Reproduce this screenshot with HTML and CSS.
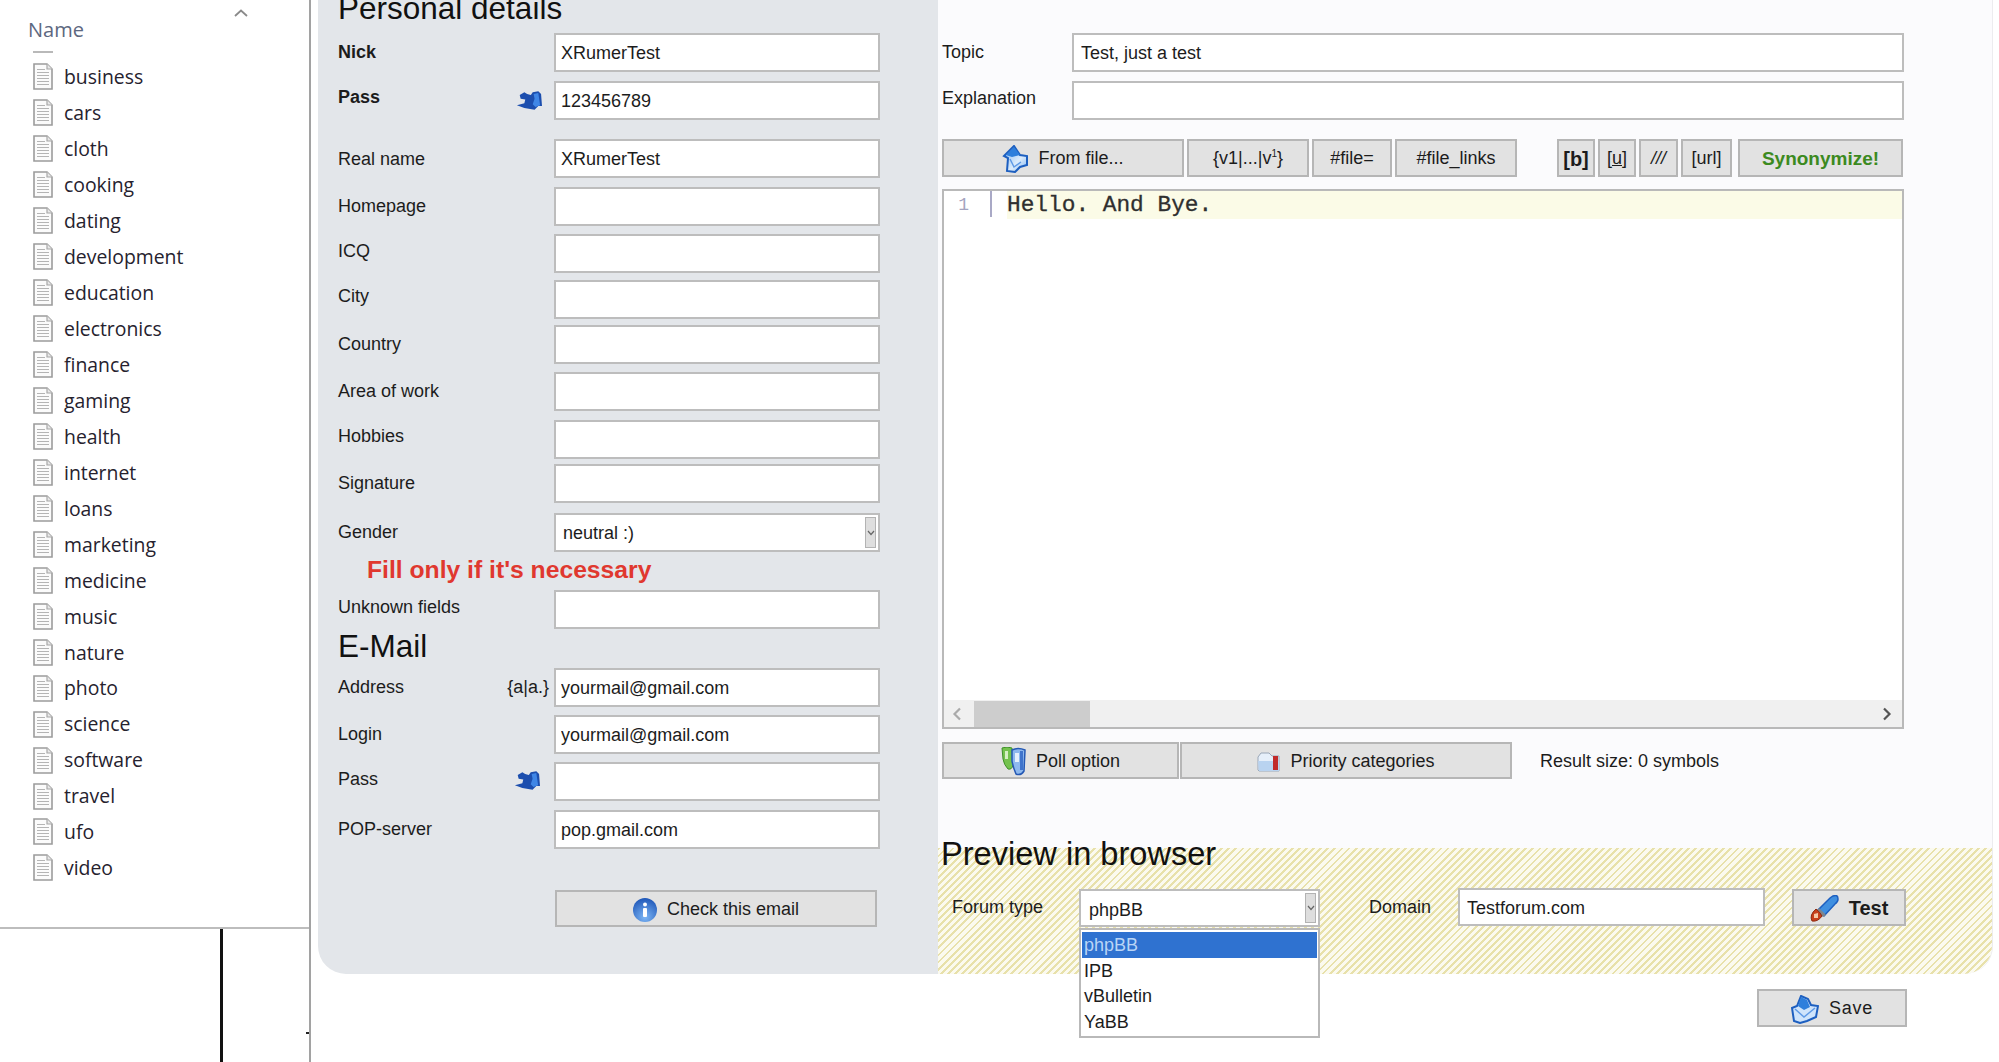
FILE: index.html
```html
<!DOCTYPE html>
<html lang="en">
<head>
<meta charset="utf-8">
<title>Project editor</title>
<link rel="stylesheet" href="styles.css">
</head>
<body>
<svg class="defs" width="0" height="0">
  <symbol id="doc" viewBox="0 0 20 27">
    <path d="M1 1H14L19 6V26H1Z" fill="#fbfbfb" stroke="#9c9c9c" stroke-width="1.6"/>
    <path d="M14 1V6H19" fill="#e8e8e8" stroke="#a8a8a8" stroke-width="1.2"/>
    <path d="M4 6.5H12M4 9.5H16M4 12.5H16M4 15.500H16M4 18.500H16M4 21.500H16" stroke="#b4b4b4" stroke-width="1.2"/>
  </symbol>
  <symbol id="shirt" viewBox="0 0 28 21">
    <path d="M4 4L9 1L12 3L16 4L18 1L24 0L27 3L28 16L24 16L20 20L9 18L1 15L9 13L10 9L5 8Z" fill="#1c4eae"/>
    <path d="M19 3L24 2L26 15L21 17L18 14L20 8Z" fill="#3f86e6"/>
  </symbol>
</svg>

<aside class="sidebar">
  <div class="files">
    <div class="files-head">
      <div class="files-title">
        <span>Name</span>
        <svg class="sort" width="14" height="8" viewBox="0 0 14 8"><path d="M1 7L7 1.500L13 7" fill="none" stroke="#8a8a8a" stroke-width="1.800"/></svg>
      </div>
      <div class="files-tick"></div>
    </div>
    <ul class="file-list">
      <li><svg class="doc"><use href="#doc"/></svg>business</li>
      <li><svg class="doc"><use href="#doc"/></svg>cars</li>
      <li><svg class="doc"><use href="#doc"/></svg>cloth</li>
      <li><svg class="doc"><use href="#doc"/></svg>cooking</li>
      <li><svg class="doc"><use href="#doc"/></svg>dating</li>
      <li><svg class="doc"><use href="#doc"/></svg>development</li>
      <li><svg class="doc"><use href="#doc"/></svg>education</li>
      <li><svg class="doc"><use href="#doc"/></svg>electronics</li>
      <li><svg class="doc"><use href="#doc"/></svg>finance</li>
      <li><svg class="doc"><use href="#doc"/></svg>gaming</li>
      <li><svg class="doc"><use href="#doc"/></svg>health</li>
      <li><svg class="doc"><use href="#doc"/></svg>internet</li>
      <li><svg class="doc"><use href="#doc"/></svg>loans</li>
      <li><svg class="doc"><use href="#doc"/></svg>marketing</li>
      <li><svg class="doc"><use href="#doc"/></svg>medicine</li>
      <li><svg class="doc"><use href="#doc"/></svg>music</li>
      <li><svg class="doc"><use href="#doc"/></svg>nature</li>
      <li><svg class="doc"><use href="#doc"/></svg>photo</li>
      <li><svg class="doc"><use href="#doc"/></svg>science</li>
      <li><svg class="doc"><use href="#doc"/></svg>software</li>
      <li><svg class="doc"><use href="#doc"/></svg>travel</li>
      <li><svg class="doc"><use href="#doc"/></svg>ufo</li>
      <li><svg class="doc"><use href="#doc"/></svg>video</li>
    </ul>
  </div>
  <div class="sidebar-foot"><div class="splitter"></div><div class="speck"></div></div>
</aside>

<main class="main">
  <div class="panel">
    <section class="details">
      <h2 class="title title-first">Personal details</h2><span></span>

      <label class="lbl strong">Nick</label><input class="field" value="XRumerTest">
      <label class="lbl strong lift"><span>Pass</span><svg class="shirt"><use href="#shirt"/></svg></label><input class="field" value="123456789">
      <label class="lbl drop">Real name</label><input class="field" value="XRumerTest">
      <label class="lbl">Homepage</label><input class="field">
      <label class="lbl lift-s">ICQ</label><input class="field">
      <label class="lbl lift">City</label><input class="field">
      <label class="lbl">Country</label><input class="field">
      <label class="lbl">Area of work</label><input class="field">
      <label class="lbl lift">Hobbies</label><input class="field">
      <label class="lbl">Signature</label><input class="field">
      <label class="lbl">Gender</label>
      <div class="combo"><span>neutral :)</span><span class="combo-btn"><svg width="8" height="6" viewBox="0 0 8 6"><path d="M1 1L4 4.500L7 1" fill="none" stroke="#666" stroke-width="1.200"/></svg></span></div>
      <p class="note">Fill only if it's necessary</p>
      <label class="lbl lift-s">Unknown fields</label><input class="field">
      <h2 class="title title-mail">E-Mail</h2>
      <label class="lbl"><span>Address</span><span class="hint">{a|a.}</span></label><input class="field" value="yourmail@gmail.com">
      <label class="lbl">Login</label><input class="field" value="yourmail@gmail.com">
      <label class="lbl lift-s"><span>Pass</span><svg class="shirt shirt-b"><use href="#shirt"/></svg></label><input class="field">
      <label class="lbl">POP-server</label><input class="field" value="pop.gmail.com">
      <button class="btn btn-check">
        <svg width="24" height="26" viewBox="0 0 24 26"><defs><radialGradient id="infoG" cx=".5" cy=".8" r=".8"><stop offset="0" stop-color="#7db6f5"/><stop offset="1" stop-color="#1f57b8"/></radialGradient></defs><circle cx="12" cy="13" r="12" fill="url(#infoG)"/><circle cx="12" cy="7.500" r="2" fill="#fff"/><rect x="10" y="11" width="4" height="9" rx="1" fill="#fff"/></svg>
        <span>Check this email</span>
      </button>
    </section>

    <section class="message">
      <div class="message-top">
        <div class="line"><label class="lbl-r">Topic</label><input class="field field-wide" value="Test, just a test"></div>
        <div class="line line-lift"><label class="lbl-r">Explanation</label><input class="field field-wide"></div>
        <div class="tools">
          <button class="btn w-file">
            <svg width="26" height="28" viewBox="0 0 26 28"><defs><linearGradient id="fileG" x1="0" y1="0" x2="1" y2="1"><stop offset="0" stop-color="#7fb4ef"/><stop offset=".6" stop-color="#dcecfc"/><stop offset="1" stop-color="#7fb4ef"/></linearGradient></defs><path d="M12 1L2 11L6 13L5 26L13 27L18 22L25 20L25 11L18 10Z" fill="url(#fileG)" stroke="#1d5fc0" stroke-width="2"/><path d="M12 2L4 10L10 12L18 10Z" fill="#2e7fdc"/><path d="M8 14L12 22L19 17" fill="none" stroke="#5f9ae6" stroke-width="1.500"/></svg>
            <span>From file...</span>
          </button>
          <button class="btn w-var"><span>{v1|...|v<sup class="sup">1</sup>}</span></button>
          <button class="btn w-eq">#file=</button>
          <button class="btn w-links">#file_links</button>
          <button class="btn w-b tools-sep"><b>[b]</b></button>
          <button class="btn w-u"><span>[<u>u</u>]</span></button>
          <button class="btn w-i"><i>///</i></button>
          <button class="btn w-url">[url]</button>
          <button class="btn w-syn"><b>Synonymize!</b></button>
        </div>
        <div class="editor">
          <div class="editor-body">
            <div class="gutter"><div class="ln">1</div></div>
            <div class="code"><div class="code-line">Hello. And Bye.</div></div>
          </div>
          <div class="hscroll">
            <svg class="arrow" width="10" height="14" viewBox="0 0 10 14"><path d="M8 1.500L2.500 7L8 12.500" fill="none" stroke="#aaa" stroke-width="2.200"/></svg>
            <div class="thumb"></div>
            <svg class="arrow arrow-r" width="10" height="14" viewBox="0 0 10 14"><path d="M2 1.500L7.500 7L2 12.500" fill="none" stroke="#555" stroke-width="2.200"/></svg>
          </div>
        </div>
        <div class="under">
          <button class="btn w-poll">
            <svg width="25" height="29" viewBox="0 0 25 29"><path d="M1 1Q6 -1 11 1L12 18Q11 23 7 22Q3 18 2 12Z" fill="#74c24e" stroke="#3f8f2a"/><path d="M4 4H7V12H4Z" fill="#d6f0c4"/><path d="M11 3Q17 0 24 3L23 24Q20 29 15 27Q12 20 11 14Z" fill="#8db8ee" stroke="#2458b4" stroke-width="1.500"/><path d="M14 6H18V15H14Z" fill="#e4f0fc"/><path d="M19 4H22V23H19Z" fill="#3f74cc"/></svg>
            <span>Poll option</span>
          </button>
          <button class="btn w-prio">
            <svg width="23" height="20" viewBox="0 0 23 20"><path d="M1 5L4 1H12L15 4H22V19H2L1 18Z" fill="#e6effa" stroke="#9aa7b8"/><path d="M1 9H22V19H2Z" fill="#b9d3f0"/><rect x="16" y="4" width="5" height="14" fill="#c12a2a"/></svg>
            <span>Priority categories</span>
          </button>
          <span class="result">Result size: 0 symbols</span>
        </div>
      </div>
      <div class="preview">
        <h2 class="title title-preview">Preview in browser</h2>
        <div class="preview-row">
          <label class="lbl-forum">Forum type</label>
          <div class="combo combo-forum">
            <span>phpBB</span><span class="combo-btn"><svg width="8" height="6" viewBox="0 0 8 6"><path d="M1 1L4 4.500L7 1" fill="none" stroke="#666" stroke-width="1.200"/></svg></span>
            <ul class="dropdown">
              <li class="dropdown-on">phpBB</li>
              <li>IPB</li>
              <li>vBulletin</li>
              <li>YaBB</li>
            </ul>
          </div>
          <label class="lbl-domain">Domain</label>
          <input class="field field-domain" value="Testforum.com">
          <button class="btn w-test">
            <svg width="29" height="27" viewBox="0 0 29 27"><path d="M23 1Q28 -1 28 4Q28 7 25 9L14 21L8 15L20 3Z" fill="#3f8fe0" stroke="#1d5fc0" stroke-width="1.500"/><path d="M9 13L16 20L13 22L6 16Z" fill="#7f858c"/><path d="M6 14Q10 17 12 21Q8 27 2 26Q-1 20 6 14Z" fill="#c8401c" stroke="#8e2a10"/><path d="M4 19L8 18L8 23L4 23Z" fill="#f4c9a8"/></svg>
            <b>Test</b>
          </button>
        </div>
      </div>
    </section>
  </div>
  <button class="btn w-save">
    <svg width="28" height="29" viewBox="0 0 28 29"><path d="M10 1L17 4L20 10L27 11L25 22L16 26L9 28L3 26L1 13L6 11Z" fill="#cfe4fb" stroke="#1d5fc0" stroke-width="2"/><path d="M10 2L16 5L19 12L13 15L7 11Z" fill="#2e7fdc"/><path d="M4 14L13 22L24 13" fill="none" stroke="#5f9ae6" stroke-width="1.500"/></svg>
    <span>Save</span>
  </button>
</main>
</body>
</html>
```

FILE: styles.css
```css
* { box-sizing: border-box; }

html, body {
  margin: 0;
  height: 1062px;
  overflow: hidden;
  background: #fff;
}

body {
  display: flex;
  font: 18px/1.2 "Liberation Sans", Arial, sans-serif;
  color: #1c1c1c;
}

.defs { display: none; }

/* Left file pane */
.sidebar {
  flex: 0 0 311px;
  height: 1062px;
  display: flex;
  flex-direction: column;
  border-right: 2px solid #a2a2a2;
}

.files { height: 927px; }

.files-head {
  height: 59px;
  padding: 18px 61px 0 28px;
}

.files-title {
  display: flex;
  justify-content: space-between;
  font: 20px/24px "Open Sans", sans-serif;
  color: #5d6880;
}

.sort { margin-top: -9px; }

.files-tick {
  width: 20px;
  height: 2px;
  margin: 9px 0 0 5px;
  background: #b9b9b9;
}

.file-list {
  list-style: none;
  margin: 0;
  padding: 0 0 0 33px;
  font: 19.400px/1 "Open Sans", sans-serif;
  color: #26222e;
}

.file-list li {
  display: flex;
  align-items: center;
  gap: 11px;
  height: 35.960px;
}

.doc { width: 20px; height: 27px; }

.sidebar-foot {
  position: relative;
  flex: 1;
  border-top: 2px solid #bdbdbd;
}

.splitter {
  width: 3px;
  height: 100%;
  margin-left: 220px;
  background: #111;
}

.speck {
  position: absolute;
  right: 0;
  top: 103px;
  width: 3px;
  height: 2px;
  background: #222;
}

/* Main panel */
.main { flex: 1; padding: 0 7px; }

.panel {
  display: grid;
  grid-template-columns: 620px 1055px;
  height: 974px;
}

.details {
  display: grid;
  grid-template-columns: 216px 326px;
  grid-template-rows: 33px 48px 58px 48px 47px 46px 45px 47px 48px 44px 49px 39px 38px 38px 40px 47px 47px 48px 80px 37px;
  padding-left: 20px;
  background: #e3e6ea;
  border-radius: 0 0 0 28px;
}

.title {
  margin: 0;
  font-size: 31.500px;
  font-weight: 400;
  color: #111;
}

.title-first { align-self: end; line-height: 32px; margin-bottom: 9px; white-space: nowrap; }
.title-mail { grid-column: 1 / 3; line-height: 36px; }

.lbl {
  display: flex;
  align-items: center;
  justify-content: space-between;
  height: 39px;
  padding-right: 12px;
}

.lift { padding-bottom: 5px; }
.lift-s { padding-bottom: 3px; }
.drop { padding-top: 2px; }
.strong { font-weight: 700; }

.shirt { width: 26px; height: 20px; margin-top: 5px; }
.shirt-b { margin-right: 2px; margin-top: 1px; }

.hint { margin-right: -7px; }

.field {
  display: block;
  width: 100%;
  height: 39px;
  padding: 2px 5px 0;
  border: 2px solid #bdbdbd;
  background: #fff;
  font: inherit;
  color: #1c1c1c;
  outline: 0;
}

.combo {
  position: relative;
  display: flex;
  align-items: center;
  justify-content: space-between;
  height: 39px;
  padding: 2px 2px 0 7px;
  border: 2px solid #bdbdbd;
  background: #fff;
}

.combo-btn {
  display: flex;
  align-items: center;
  justify-content: center;
  align-self: stretch;
  width: 11px;
  margin: 0 0 2px;
  background: #dedede;
  border: 1px solid #b3b3b3;
}

.note {
  grid-column: 1 / 3;
  margin: 0;
  padding: 2px 0 0 29px;
  font-size: 24.700px;
  font-weight: 700;
  line-height: 32px;
  color: #e0382f;
}

.btn {
  display: flex;
  align-items: center;
  justify-content: center;
  gap: 10px;
  flex: none;
  height: 38px;
  padding: 2px 0 0;
  border: 2px solid #b6b6b6;
  background: #e2e2e2;
  font: inherit;
  color: #1c1c1c;
}

.btn-check { grid-column: 2; width: 322px; height: 37px; margin-left: 1px; }

/* Right part */
.message {
  display: flex;
  flex-direction: column;
  background: #fbfbfd;
  border-right: 1px solid #ececef;
  border-radius: 0 0 28px 0;
}

.message-top {
  height: 848px;
  padding: 33px 0 0 4px;
}

.line {
  display: flex;
  height: 39px;
  margin-bottom: 9px;
}

.lbl-r {
  flex: 0 0 130px;
  padding-top: 9px;
}

.line-lift { margin-bottom: 19px; }
.line-lift .lbl-r { padding-top: 7px; }

.field-wide { width: 832px; padding-left: 7px; }

.tools { display: flex; gap: 3px; height: 38px; margin-bottom: 12px; }
.tools-sep { margin-left: 37px; }

.w-file { width: 242px; }
.w-var { width: 122px; }
.w-eq { width: 80px; }
.w-links { width: 122px; }
.w-b { width: 38px; font-size: 20px; }
.w-u { width: 38px; }
.w-i { width: 39px; }
.w-url { width: 51px; }
.w-syn { width: 165px; margin-left: 3px; font-size: 19px; color: #3c8a1f; }

.sup { font-size: 10px; line-height: 0; }

.editor {
  display: flex;
  flex-direction: column;
  width: 962px;
  height: 540px;
  border: 2px solid #b9b9b9;
  background: #fff;
}

.editor-body { display: flex; flex: 1; }
.gutter { flex: 0 0 63px; }

.ln {
  width: 48px;
  height: 26px;
  padding-right: 21px;
  border-right: 2px solid #a9a9c6;
  text-align: right;
  font: 18px/28px "Liberation Mono", monospace;
  color: #a4a4c0;
}

.code { flex: 1; }

.code-line {
  height: 28px;
  background: #fbfbe7;
  font: 22.800px/28px "Liberation Mono", monospace;
  color: #2f2f2f;
  -webkit-text-stroke: 0.3px #2f2f2f;
}

.hscroll {
  display: flex;
  align-items: center;
  height: 27px;
  background: #f0f0f0;
}

.arrow { flex: none; margin-left: 8px; }
.thumb { width: 116px; height: 26px; margin-left: 12px; background: #cdcdcd; }
.arrow-r { margin-left: auto; margin-right: 10px; }

.under {
  display: flex;
  align-items: center;
  margin-top: 13px;
}

.under .btn { height: 37px; }
.w-poll { width: 237px; }
.w-prio { width: 332px; margin-left: 1px; }
.result { margin-left: 28px; padding-top: 2px; }

/* Preview strip */
.preview {
  height: 126px;
  background: repeating-linear-gradient(135deg, #e8e1ab 0 2px, #fbfaef 2px 5px);
  border-radius: 0 0 28px 0;
}

.title-preview {
  height: 40px;
  margin: -14px 0 0 3px;
  font-size: 32.600px;
  line-height: 40px;
}

.preview-row {
  display: flex;
  align-items: center;
  height: 38px;
  margin-top: 14px;
  padding-left: 14px;
}

.lbl-forum { flex: 0 0 127px; padding-top: 2px; }

.combo-forum {
  flex: 0 0 241px;
  height: 38px;
  margin-top: 2px;
  padding: 5px 2px 0 8px;
}

.combo-forum .combo-btn { margin: -3px 0 2px; }

.dropdown {
  position: absolute;
  left: -2px;
  top: calc(100% + 3px);
  width: 241px;
  height: 110px;
  margin: 0;
  padding: 2px 1px;
  list-style: none;
  border: 2px solid #b9b9b9;
  background: #fff;
}

.dropdown li { height: 25.600px; padding-left: 2px; line-height: 27px; }
.dropdown .dropdown-on { background: #2f72d0; color: #b9d5f6; }

.lbl-domain { flex: 0 0 89px; margin-left: 49px; padding-top: 2px; }
.field-domain { flex: none; width: 307px; height: 38px; padding-left: 7px; }
.w-test { width: 114px; height: 37px; margin-left: 27px; font-size: 20px; }

.w-save {
  width: 150px;
  margin: 15px 86px 0 auto;
  letter-spacing: .8px;
}
```
